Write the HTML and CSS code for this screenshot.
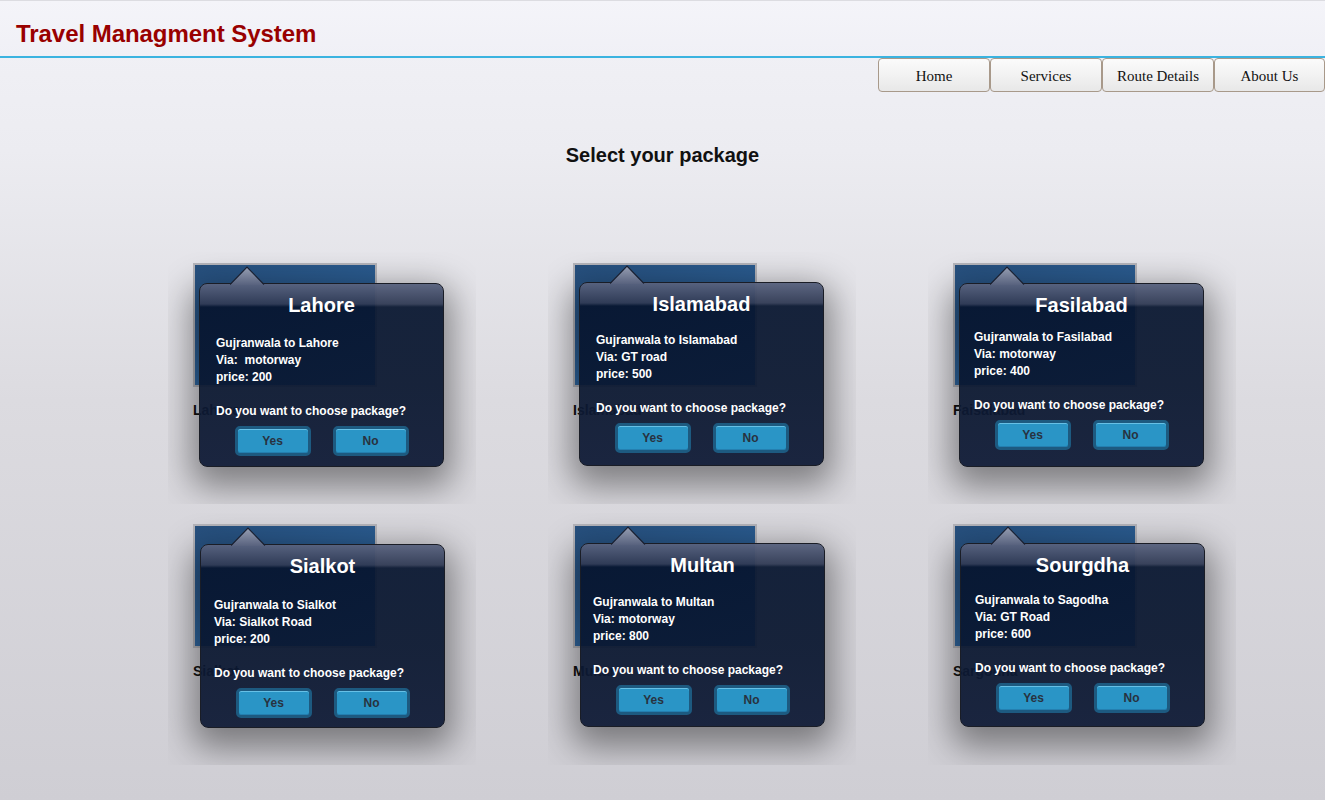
FILE: index.html
```html
<!DOCTYPE html>
<html>
<head>
<meta charset="utf-8">
<title>Travel Managment System</title>
<link rel="stylesheet" href="styles.css">
</head>
<body>
<header class="topbar">
  <h1 class="brand">Travel Managment System</h1>
</header>
<nav class="menu">
  <a class="menu-btn">Home</a>
  <a class="menu-btn">Services</a>
  <a class="menu-btn">Route Details</a>
  <a class="menu-btn">About Us</a>
</nav>
<h2 class="page-title">Select your package</h2>
<svg class="defs" width="0" height="0"><defs><linearGradient id="ag1" x1="0" y1="0" x2="0" y2="1"><stop offset="0" stop-color="#959db1"/><stop offset="1" stop-color="#58627e"/></linearGradient></defs></svg>
<main class="packages">
  <div class="tile">
    <div class="thumb"></div>
    <div class="label">Lahore</div>
    <div class="popup">
      <svg class="arrow" width="36" height="19" viewBox="0 0 36 19"><path d="M0,19 L17,1.5 L34,19 Z" fill="url(#ag1)"/><path d="M0,18.5 L17,1 L34,18.5" fill="none" stroke="#1b2030" stroke-width="1.1"/></svg>
      <div class="popup-title">Lahore</div>
      <div class="info t18">Gujranwala to Lahore<br>Via:&nbsp; motorway<br>price: 200</div>
      <div class="question">Do you want to choose package?</div>
      <div class="actions"><button class="btn">Yes</button><button class="btn">No</button></div>
    </div>
  </div>
  <div class="tile">
    <div class="thumb"></div>
    <div class="label">Islamabad</div>
    <div class="popup shift-up">
      <svg class="arrow" width="36" height="19" viewBox="0 0 36 19"><path d="M0,19 L17,1.5 L34,19 Z" fill="url(#ag1)"/><path d="M0,18.5 L17,1 L34,18.5" fill="none" stroke="#1b2030" stroke-width="1.1"/></svg>
      <div class="popup-title">Islamabad</div>
      <div class="info t16">Gujranwala to Islamabad<br>Via: GT road<br>price: 500</div>
      <div class="question">Do you want to choose package?</div>
      <div class="actions"><button class="btn">Yes</button><button class="btn">No</button></div>
    </div>
  </div>
  <div class="tile">
    <div class="thumb"></div>
    <div class="label">Faisalabad</div>
    <div class="popup">
      <svg class="arrow" width="36" height="19" viewBox="0 0 36 19"><path d="M0,19 L17,1.5 L34,19 Z" fill="url(#ag1)"/><path d="M0,18.5 L17,1 L34,18.5" fill="none" stroke="#1b2030" stroke-width="1.1"/></svg>
      <div class="popup-title">Fasilabad</div>
      <div class="info t12 l15">Gujranwala to Fasilabad<br>Via: motorway<br>price: 400</div>
      <div class="question l15">Do you want to choose package?</div>
      <div class="actions"><button class="btn">Yes</button><button class="btn">No</button></div>
    </div>
  </div>
  <div class="tile">
    <div class="thumb"></div>
    <div class="label">Sialkot</div>
    <div class="popup shift-right">
      <svg class="arrow" width="36" height="19" viewBox="0 0 36 19"><path d="M0,19 L17,1.5 L34,19 Z" fill="url(#ag1)"/><path d="M0,18.5 L17,1 L34,18.5" fill="none" stroke="#1b2030" stroke-width="1.1"/></svg>
      <div class="popup-title">Sialkot</div>
      <div class="info t19 l14">Gujranwala to Sialkot<br>Via: Sialkot Road<br>price: 200</div>
      <div class="question l14">Do you want to choose package?</div>
      <div class="actions"><button class="btn">Yes</button><button class="btn">No</button></div>
    </div>
  </div>
  <div class="tile">
    <div class="thumb"></div>
    <div class="label">Multan</div>
    <div class="popup shift-right shift-up">
      <svg class="arrow" width="36" height="19" viewBox="0 0 36 19"><path d="M0,19 L17,1.5 L34,19 Z" fill="url(#ag1)"/><path d="M0,18.5 L17,1 L34,18.5" fill="none" stroke="#1b2030" stroke-width="1.1"/></svg>
      <div class="popup-title">Multan</div>
      <div class="info t17 l13">Gujranwala to Multan<br>Via: motorway<br>price: 800</div>
      <div class="question l13">Do you want to choose package?</div>
      <div class="actions"><button class="btn">Yes</button><button class="btn">No</button></div>
    </div>
  </div>
  <div class="tile">
    <div class="thumb"></div>
    <div class="label">Sargodha</div>
    <div class="popup shift-right shift-up">
      <svg class="arrow" width="36" height="19" viewBox="0 0 36 19"><path d="M0,19 L17,1.5 L34,19 Z" fill="url(#ag1)"/><path d="M0,18.5 L17,1 L34,18.5" fill="none" stroke="#1b2030" stroke-width="1.1"/></svg>
      <div class="popup-title">Sourgdha</div>
      <div class="info t15 l15">Gujranwala to Sagodha<br>Via: GT Road<br>price: 600</div>
      <div class="question l15">Do you want to choose package?</div>
      <div class="actions"><button class="btn">Yes</button><button class="btn">No</button></div>
    </div>
  </div>
</main>
</body>
</html>
```
FILE: styles.css
```css
html, body {
  margin: 0;
  padding: 0;
}
body {
  min-height: 800px;
  font-family: "Liberation Sans", Arial, sans-serif;
  background: linear-gradient(to bottom, #f2f2f7 0px, #ececf1 150px, #dcdbe0 400px, #cfced4 800px);
  overflow: hidden;
}
.defs {
  position: absolute;
  width: 0;
  height: 0;
}
.topbar {
  height: 55px;
  border-top: 1px solid #dcdce1;
  border-bottom: 2px solid #3bb3e0;
  background: linear-gradient(to bottom, #f4f4f9, #f0f0f6);
  padding: 0 16px;
}
.brand {
  margin: 0;
  padding-top: 19px;
  font-size: 24px;
  line-height: 28px;
  font-weight: bold;
  color: #990000;
  letter-spacing: -0.05px;
}
.menu {
  display: flex;
  justify-content: flex-end;
  height: 34px;
}
.menu-btn {
  box-sizing: border-box;
  width: 112px;
  height: 34px;
  border: 1px solid #a8998a;
  border-radius: 4px;
  background: linear-gradient(to bottom, #fbfbfb 0%, #f1f1f1 55%, #e8e8e8 100%);
  font-family: "Liberation Serif", "Times New Roman", serif;
  font-size: 15px;
  line-height: 34px;
  text-align: center;
  color: #111;
}
.menu-btn:last-child {
  width: 111px;
}
.page-title {
  margin: 0;
  padding-top: 51px;
  font-size: 20px;
  line-height: 24px;
  font-weight: bold;
  text-align: center;
  color: #111;
}
.packages {
  display: grid;
  grid-template-columns: repeat(3, 308px);
  column-gap: 72px;
  row-gap: 9px;
  padding-left: 168px;
  margin-top: 85px;
}
.tile {
  position: relative;
  height: 252px;
  overflow: hidden;
  padding: 11px 0 0 25px;
  box-sizing: border-box;
}
.thumb {
  width: 180px;
  height: 120px;
  border: 2px solid #b4b4ba;
  background: linear-gradient(160deg, #27507e 0%, #2b5e94 45%, #3a7dc0 100%);
}
.label {
  margin-top: 14px;
  font-size: 14px;
  font-weight: bold;
  color: #111;
  line-height: 18px;
}
.popup {
  position: absolute;
  left: 31px;
  top: 31px;
  width: 243px;
  height: 182px;
  border: 1px solid #1a1d26;
  border-radius: 8px;
  background: linear-gradient(to bottom,
    rgba(88, 98, 126, 0.97) 0px,
    rgba(48, 58, 84, 0.95) 20px,
    rgba(6, 20, 46, 0.93) 23px,
    rgba(8, 21, 46, 0.93) 100px,
    rgba(20, 31, 58, 0.97) 182px);
  box-shadow: 0 12px 34px 8px rgba(0, 0, 0, 0.42);
  color: #fff;
}
.popup.shift-up { top: 30px; }
.popup.shift-right { left: 32px; }
.arrow {
  position: absolute;
  left: 30px;
  top: -18px;
  display: block;
}
.popup-title {
  margin-top: 9px;
  text-align: center;
  font-size: 20px;
  line-height: 24px;
  font-weight: bold;
  color: #fff;
}
.info {
  padding-left: 16px;
  font-size: 12px;
  line-height: 17px;
  font-weight: bold;
}
.t19 { margin-top: 19px; }
.t18 { margin-top: 18px; }
.t17 { margin-top: 17px; }
.t16 { margin-top: 16px; }
.t15 { margin-top: 15px; }
.t12 { margin-top: 12px; }
.question {
  padding-left: 16px;
  margin-top: 17px;
  font-size: 12px;
  line-height: 17px;
  font-weight: bold;
}
.l15 { padding-left: 14px; }
.l14 { padding-left: 13px; }
.l13 { padding-left: 12px; }
.actions {
  display: flex;
  justify-content: center;
  gap: 22px;
  margin-top: 6px;
}
.btn {
  width: 76px;
  height: 30px;
  padding: 0;
  border: 3px solid #1d5a80;
  border-radius: 5px;
  background: #2a95c6;
  box-shadow: inset 0 1px 0 #66c0e6, inset 0 -1px 0 #247fb0;
  font-family: "Liberation Sans", Arial, sans-serif;
  font-size: 12px;
  font-weight: bold;
  color: #28323f;
  line-height: 22px;
}
```
